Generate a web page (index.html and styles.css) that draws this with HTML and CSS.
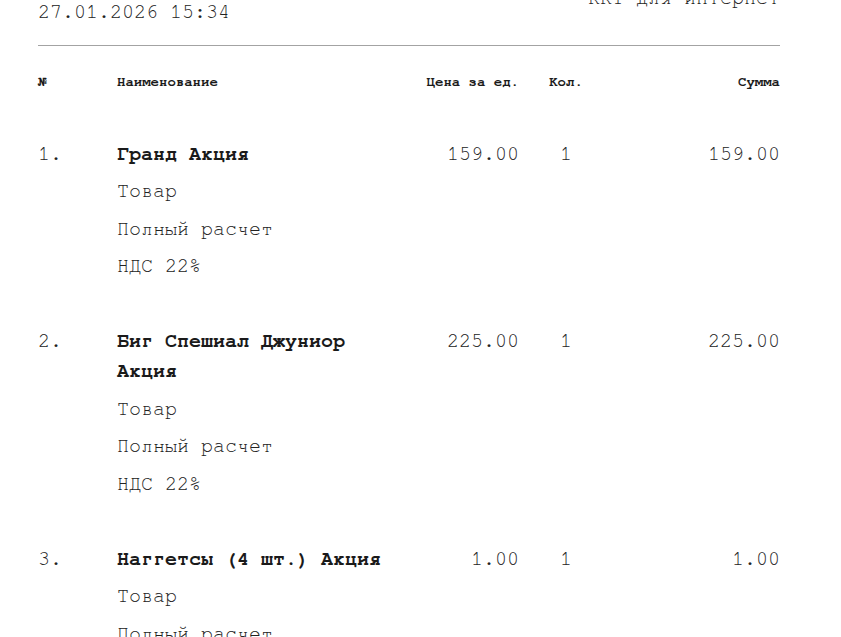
FILE: index.html
```html
<!DOCTYPE html>
<html lang="ru">
<head>
  <meta charset="UTF-8">
  <meta name="viewport" content="width=device-width, initial-scale=1.0">
  <title>Чек</title>
  <link rel="stylesheet" href="styles.css">
</head>
<body>

<div id="receipt">
  <div class="receipt-head">
    <div class="head-left">27.01.2026 15:34</div>
    <div class="head-right">ККТ для интернет</div>
  </div>

  <hr class="divider">

  <div class="row cols">
    <div>№</div>
    <div>Наименование</div>
    <div class="price">Цена за ед.</div>
    <div class="qty">Кол.</div>
    <div class="sum">Сумма</div>
  </div>

  <div class="items">
    <div class="row item">
      <div>1.</div>
      <div class="item-info">
        <div class="item-name">Гранд Акция</div>
        <div>Товар</div>
        <div>Полный расчет</div>
        <div>НДС 22%</div>
      </div>
      <div class="price">159.00</div>
      <div class="qty">1</div>
      <div class="sum">159.00</div>
    </div>

    <div class="row item">
      <div>2.</div>
      <div class="item-info">
        <div class="item-name">Биг Спешиал Джуниор Акция</div>
        <div>Товар</div>
        <div>Полный расчет</div>
        <div>НДС 22%</div>
      </div>
      <div class="price">225.00</div>
      <div class="qty">1</div>
      <div class="sum">225.00</div>
    </div>

    <div class="row item">
      <div>3.</div>
      <div class="item-info">
        <div class="item-name">Наггетсы (4 шт.) Акция</div>
        <div>Товар</div>
        <div>Полный расчет</div>
        <div>НДС 22%</div>
      </div>
      <div class="price">1.00</div>
      <div class="qty">1</div>
      <div class="sum">1.00</div>
    </div>
  </div>
</div>

</body>
</html>
```

FILE: styles.css
```css
body {
    margin: 0;
    padding: 0;
    background: #fff;
    color: #222;
    font-family: 'FreeMono', 'Liberation Mono', monospace;
    font-size: 20px;
    line-height: 30px;
    overflow: hidden;
}

#receipt {
    width: 742px;
    margin: -17px 0 0 38px;
}

.receipt-head {
    display: flex;
    justify-content: space-between;
    align-items: flex-end;
}

.head-right {
    margin-bottom: 14px;
}

.divider {
    margin: 18px 0 0 0;
    border: none;
    border-top: 1px solid #a3a3a3;
    height: 0;
}

.row {
    display: grid;
    grid-template-columns: 79px 280px 122px 94px 1fr;
}

.cols {
    margin-top: 26px;
    margin-bottom: 45.5px;
    font-size: 14px;
    line-height: 21px;
    font-weight: bold;
    color: #1a1a1a;
}

.items {
    display: flex;
    flex-direction: column;
    gap: 45px;
}

.item-info {
    display: flex;
    flex-direction: column;
    gap: 7.5px;
}

.item-name {
    font-weight: bold;
    color: #1a1a1a;
}

.price,
.sum {
    text-align: right;
}

.qty {
    text-align: center;
}
```
